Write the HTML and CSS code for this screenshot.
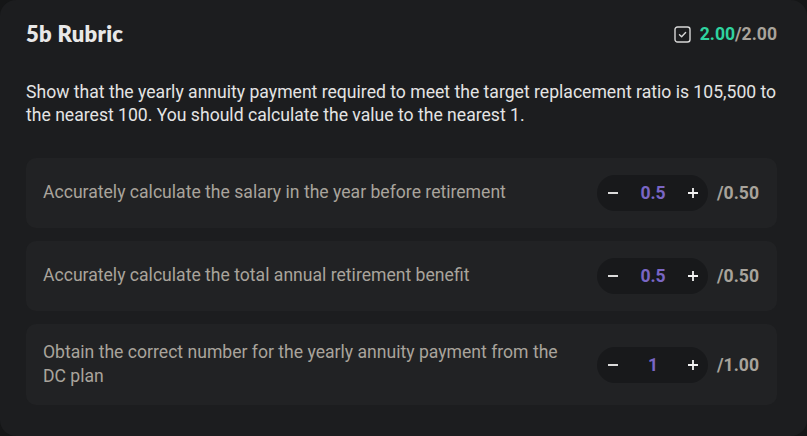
FILE: index.html
```html
<!DOCTYPE html>
<html>
<head>
<meta charset="utf-8">
<link rel="stylesheet" href="styles.css">
</head>
<body>
<div class="card">
  <div class="header">
    <h2 class="title">5b Rubric</h2>
    <div class="score">
      <svg class="check" width="17" height="17" viewBox="0 0 17 17"><rect x="1" y="1" width="15" height="15" rx="2.5" fill="none" stroke="#d8d8d8" stroke-width="1.4"/><path d="M5.5 8.8 L7.6 10.8 L11.6 6.6" fill="none" stroke="#d8d8d8" stroke-width="1.4" stroke-linecap="round" stroke-linejoin="round"/></svg>
      <span class="got">2.00</span><span class="total">/2.00</span>
    </div>
  </div>
  <p class="question">Show that the yearly annuity payment required to meet the target replacement ratio is 105,500 to the nearest 100. You should calculate the value to the nearest 1.</p>
  <div class="rows">
    <div class="row">
      <div class="crit">Accurately calculate the salary in the year before retirement</div>
      <div class="controls">
        <div class="stepper">
          <svg class="btn" width="12" height="12" viewBox="0 0 12 12"><path d="M1 6 H11" stroke="#f2f2f2" stroke-width="1.8"/></svg>
          <span class="val">0.5</span>
          <svg class="btn" width="12" height="12" viewBox="0 0 12 12"><path d="M1 6 H11 M6 1 V11" stroke="#f2f2f2" stroke-width="1.8"/></svg>
        </div>
        <span class="max">/0.50</span>
      </div>
    </div>
    <div class="row">
      <div class="crit">Accurately calculate the total annual retirement benefit</div>
      <div class="controls">
        <div class="stepper">
          <svg class="btn" width="12" height="12" viewBox="0 0 12 12"><path d="M1 6 H11" stroke="#f2f2f2" stroke-width="1.8"/></svg>
          <span class="val">0.5</span>
          <svg class="btn" width="12" height="12" viewBox="0 0 12 12"><path d="M1 6 H11 M6 1 V11" stroke="#f2f2f2" stroke-width="1.8"/></svg>
        </div>
        <span class="max">/0.50</span>
      </div>
    </div>
    <div class="row">
      <div class="crit">Obtain the correct number for the yearly annuity payment from the DC plan</div>
      <div class="controls">
        <div class="stepper">
          <svg class="btn" width="12" height="12" viewBox="0 0 12 12"><path d="M1 6 H11" stroke="#f2f2f2" stroke-width="1.8"/></svg>
          <span class="val">1</span>
          <svg class="btn" width="12" height="12" viewBox="0 0 12 12"><path d="M1 6 H11 M6 1 V11" stroke="#f2f2f2" stroke-width="1.8"/></svg>
        </div>
        <span class="max">/1.00</span>
      </div>
    </div>
  </div>
</div>
</body>
</html>
```
FILE: styles.css
```css
html, body {
  margin: 0;
  padding: 0;
  background: #151617;
}
body {
  font-family: Roboto, "Liberation Sans", sans-serif;
}
.card {
  box-sizing: border-box;
  width: 807px;
  height: 436px;
  background: #1c1d1f;
  border-radius: 16px;
  padding: 20px 30px 0 26px;
}
.header {
  display: flex;
  align-items: center;
  justify-content: space-between;
  height: 28px;
}
.title {
  margin: 0;
  font-family: Lato, "Open Sans", sans-serif;
  font-weight: 800;
  font-size: 22px;
  line-height: 28px;
  color: #e8e8e8;
  letter-spacing: 0.3px;
}
.score {
  display: flex;
  align-items: center;
  font-size: 17.6px;
  font-weight: 700;
}
.check {
  margin-right: 9px;
}
.got {
  color: #2fd39f;
}
.total {
  color: #a8a39b;
}
.question {
  margin: 33px 0 0 0;
  font-size: 17.6px;
  line-height: 23px;
  color: #e4e4e4;
}
.rows {
  margin-top: 31px;
  display: flex;
  flex-direction: column;
  gap: 13px;
}
.row {
  display: flex;
  align-items: center;
  justify-content: space-between;
  background: #212224;
  border-radius: 10px;
  padding: 17px 18px 17px 17px;
}
.crit {
  font-size: 17.6px;
  line-height: 23.5px;
  color: #a9a49c;
  max-width: 530px;
}
.controls {
  display: flex;
  align-items: center;
  gap: 9px;
}
.stepper {
  display: flex;
  align-items: center;
  justify-content: space-between;
  width: 111px;
  height: 36px;
  box-sizing: border-box;
  padding: 0 9px 0 10px;
  background: #18191b;
  border-radius: 18px;
}
.btn {
  display: block;
}
.val {
  color: #7a66c4;
  font-size: 17.6px;
  font-weight: 700;
}
.max {
  color: #a8a39b;
  font-size: 17.6px;
  font-weight: 700;
}
```
